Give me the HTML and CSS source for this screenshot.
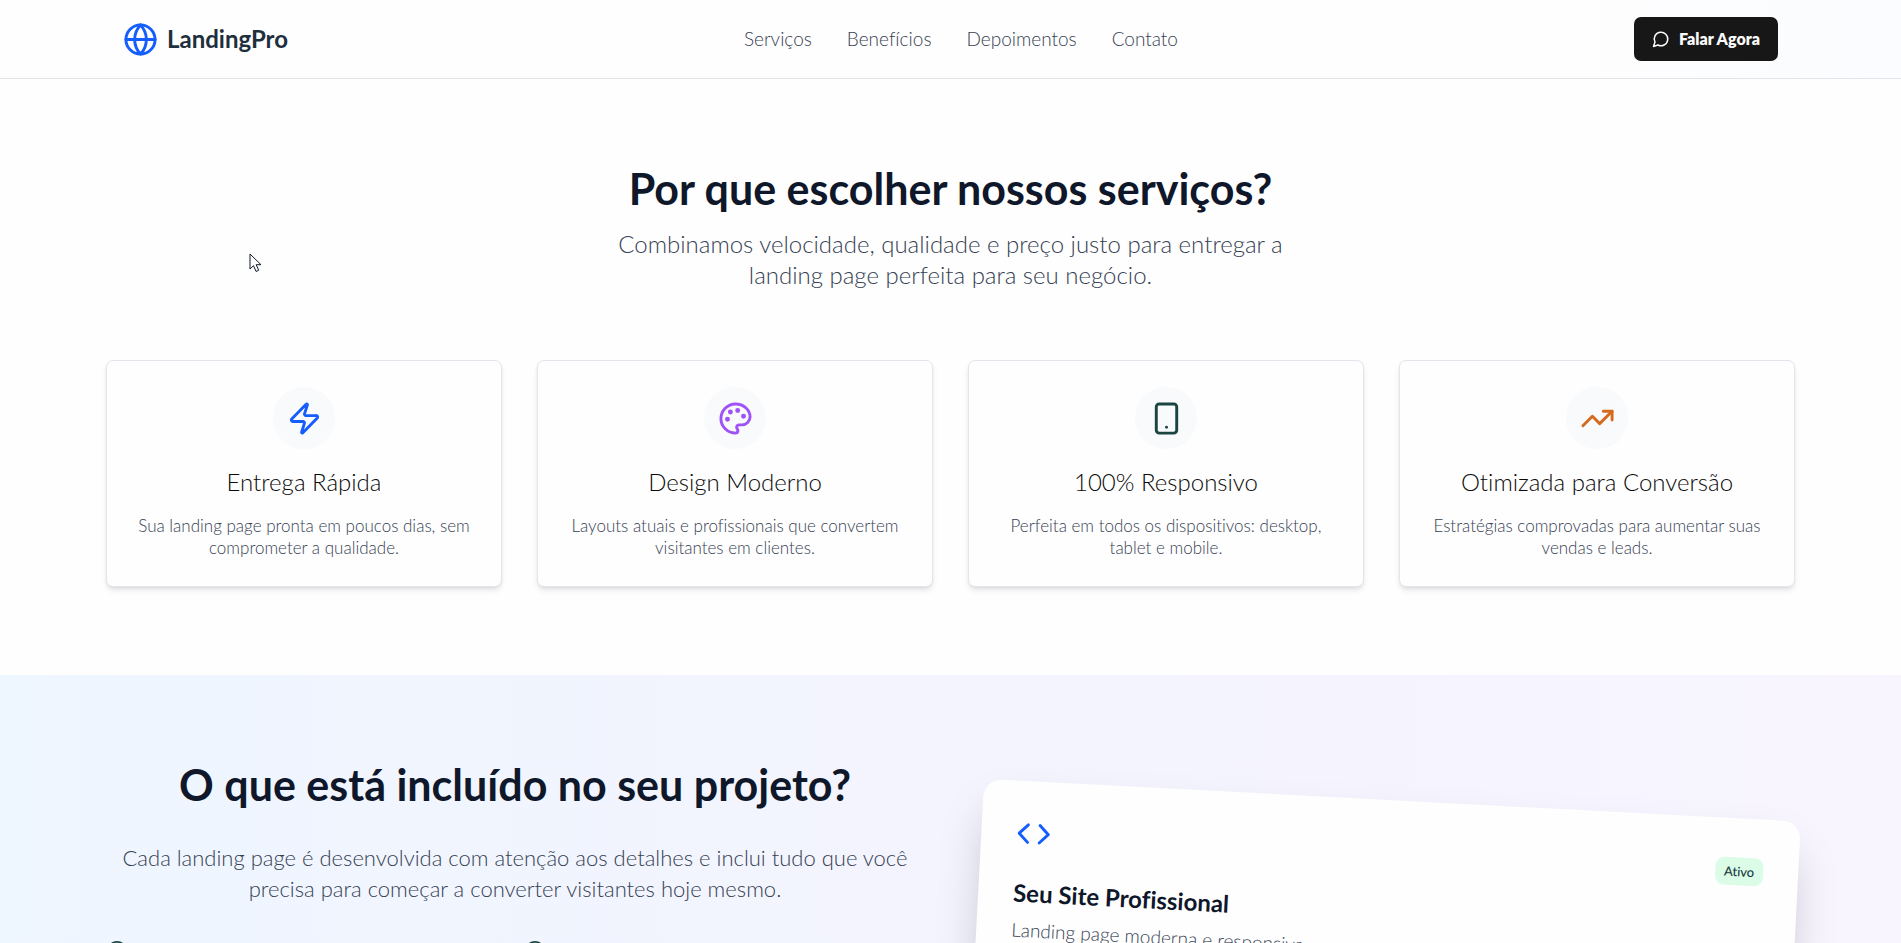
FILE: index.html
```html
<!DOCTYPE html>
<html lang="pt-BR">
<head>
<meta charset="utf-8">
<meta name="viewport" content="width=device-width, initial-scale=1">
<title>LandingPro</title>
<link rel="stylesheet" href="styles.css">
</head>
<body>
<header class="header">
  <div class="container header-inner">
    <div class="brand">
      <svg class="icon icon-lg blue" viewBox="0 0 24 24" aria-hidden="true"><circle cx="12" cy="12" r="10"/><path d="M12 2a14.5 14.5 0 0 0 0 20 14.5 14.5 0 0 0 0-20"/><path d="M2 12h20"/></svg>
      <span>LandingPro</span>
    </div>
    <nav class="nav">
      <a href="#servicos">Serviços</a>
      <a href="#beneficios">Benefícios</a>
      <a href="#depoimentos">Depoimentos</a>
      <a href="#contato">Contato</a>
    </nav>
    <button class="cta" type="button">
      <svg class="icon icon-sm" viewBox="0 0 24 24" aria-hidden="true"><path d="M7.9 20A9 9 0 1 0 4 16.1L2 22Z"/></svg>
      Falar Agora
    </button>
  </div>
</header>
<main>
  <section class="services" id="servicos">
    <div class="container">
      <h2 class="heading">Por que escolher nossos serviços?</h2>
      <p class="lead">Combinamos velocidade, qualidade e preço justo para entregar a landing page perfeita para seu negócio.</p>
      <div class="cards">
        <article class="card">
          <div class="bubble"><svg class="icon icon-lg blue" viewBox="0 0 24 24" aria-hidden="true"><path d="M4 14a1 1 0 0 1-.78-1.63l9.9-10.2a.5.5 0 0 1 .86.46l-1.92 6.02A1 1 0 0 0 13 10h7a1 1 0 0 1 .78 1.63l-9.9 10.2a.5.5 0 0 1-.86-.46l1.92-6.02A1 1 0 0 0 11 14z"/></svg></div>
          <h3>Entrega Rápida</h3>
          <p>Sua landing page pronta em poucos dias, sem comprometer a qualidade.</p>
        </article>
        <article class="card">
          <div class="bubble"><svg class="icon icon-lg purple" viewBox="0 0 24 24" aria-hidden="true"><g fill="currentColor"><circle cx="13.5" cy="6.5" r=".7"/><circle cx="17.5" cy="10.5" r=".7"/><circle cx="8.5" cy="7.5" r=".7"/><circle cx="6.5" cy="12.5" r=".7"/></g><path d="M12 2C6.5 2 2 6.5 2 12s4.500 10 10 10c.926 0 1.648-.746 1.648-1.688 0-.437-.18-.835-.437-1.125-.29-.289-.438-.652-.438-1.125a1.640 1.640 0 0 1 1.668-1.668h1.996c3.051 0 5.555-2.503 5.555-5.554C21.965 6.012 17.461 2 12 2z"/></svg></div>
          <h3>Design Moderno</h3>
          <p>Layouts atuais e profissionais que convertem visitantes em clientes.</p>
        </article>
        <article class="card">
          <div class="bubble"><svg class="icon icon-lg green" viewBox="0 0 24 24" aria-hidden="true"><rect x="5" y="2" width="14" height="20" rx="2"/><path d="M12 18h.01"/></svg></div>
          <h3>100% Responsivo</h3>
          <p>Perfeita em todos os dispositivos: desktop, tablet e mobile.</p>
        </article>
        <article class="card">
          <div class="bubble"><svg class="icon icon-lg orange" viewBox="0 0 24 24" aria-hidden="true"><path d="m22 7-8.500 8.500-5-5L2 17"/><path d="M16 7h6v6"/></svg></div>
          <h3>Otimizada para Conversão</h3>
          <p>Estratégias comprovadas para aumentar suas vendas e leads.</p>
        </article>
      </div>
    </div>
  </section>
  <section class="included" id="beneficios">
    <div class="container split">
      <div>
        <h2 class="heading">O que está incluído no seu projeto?</h2>
        <p class="intro">Cada landing page é desenvolvida com atenção aos detalhes e inclui tudo que você precisa para começar a converter visitantes hoje mesmo.</p>
        <ul class="checks">
          <li><svg class="icon icon-md green" viewBox="0 0 24 24" aria-hidden="true"><circle cx="12" cy="12" r="10"/><path d="m9 12 2 2 4-4"/></svg></li>
          <li><svg class="icon icon-md green" viewBox="0 0 24 24" aria-hidden="true"><circle cx="12" cy="12" r="10"/><path d="m9 12 2 2 4-4"/></svg></li>
        </ul>
      </div>
      <div class="showcase">
        <article class="preview">
          <div class="preview-top">
            <svg class="icon icon-lg blue" viewBox="0 0 24 24" aria-hidden="true"><path d="m16 18 6-6-6-6"/><path d="m8 6-6 6 6 6"/></svg>
            <span class="badge">Ativo</span>
          </div>
          <h3>Seu Site Profissional</h3>
          <p>Landing page moderna e responsiva</p>
        </article>
      </div>
    </div>
  </section>
</main>
<svg class="pointer" viewBox="0 0 13 20" aria-hidden="true"><path d="M1 1v15l3.500-3.300 2.600 5.800 2.600-1.200L7.200 11.700H12z"/></svg>
</body>
</html>
```
FILE: styles.css
```css
* { box-sizing: border-box; }

body {
  margin: 0;
  height: 100vh;
  overflow: hidden;
  position: relative;
  background: #fefefe;
  color: #0f172a;
  font-family: Lato, "Open Sans", sans-serif;
  font-size: 19px;
  line-height: 26px;
  font-weight: 300;
  font-variant-ligatures: none;
}

h2, h3, p, ul { margin: 0; padding: 0; }

.container {
  width: 100%;
  max-width: 1689px;
  margin: 0 auto;
}

.icon {
  display: block;
  flex: none;
  fill: none;
  stroke: currentColor;
  stroke-width: 2;
  stroke-linecap: round;
  stroke-linejoin: round;
}
.icon-sm { width: 18px; height: 18px; }
.icon-md { width: 22px; height: 22px; }
.icon-lg { width: 35px; height: 35px; }
.blue { color: #155dfc; }
.purple { color: #9f52f7; }
.green { color: #1b4540; }
.orange { color: #d66a1f; }

.header {
  border-bottom: 1px solid #e2e4ea;
  background: linear-gradient(to right, #fefefe 80%, #fbfcff);
}
.header-inner {
  display: flex;
  align-items: center;
  justify-content: space-between;
  padding: 17px;
}
.brand {
  display: flex;
  align-items: center;
  gap: 9px;
  color: #1e2f3d;
  font-size: 24px;
  font-weight: 700;
}
.nav { display: flex; gap: 35px; }
.nav a { color: #364153; text-decoration: none; }
.cta {
  display: flex;
  align-items: center;
  gap: 9px;
  height: 44px;
  padding: 0 18px;
  border: 0;
  border-radius: 7px;
  background: #171717;
  color: #fafafa;
  font: 800 16px/22px Lato, "Open Sans", sans-serif;
}

.heading {
  font-size: 43px;
  line-height: 44px;
  font-weight: 700;
  text-align: center;
}

.services { padding: 88px 17px; }
.lead {
  max-width: 740px;
  margin: 17px auto 70px;
  color: #364153;
  font-size: 24px;
  line-height: 31px;
  text-align: center;
}
.cards {
  display: grid;
  grid-template-columns: repeat(4, 1fr);
  gap: 35px;
}
.card {
  display: flex;
  flex-direction: column;
  align-items: center;
  padding: 26px 26px 27px;
  border: 1px solid #e3e5ec;
  border-radius: 7px;
  background: #fefefe;
  box-shadow: 0 4px 6px -1px rgba(0, 0, 0, .1), 0 2px 4px -2px rgba(0, 0, 0, .1);
  text-align: center;
}
.bubble {
  display: grid;
  place-items: center;
  width: 62px;
  height: 62px;
  border-radius: 50%;
  background: #f9fafc;
}
.card h3 {
  margin: 17px 0 18px;
  color: #0a0a0a;
  font-size: 24px;
  line-height: 31px;
  font-weight: 300;
}
.card p {
  color: #364153;
  font-size: 17px;
  line-height: 22px;
}

.included {
  padding: 88px 17px;
  background: linear-gradient(to right, #eef6ff, #f3f4fe 45%, #f8f5ff);
}
.split {
  display: grid;
  grid-template-columns: 1fr 1fr;
  gap: 53px;
}
.intro {
  margin: 35px 0 36px;
  color: #364153;
  font-size: 22px;
  line-height: 31px;
  text-align: center;
}
.checks {
  display: grid;
  grid-template-columns: 1fr 1fr;
  gap: 17px;
  list-style: none;
}
.showcase { padding-top: 37px; }
.preview {
  min-height: 250px;
  padding: 35px;
  border-radius: 18px;
  background: #fefefe;
  box-shadow: 0 25px 50px -12px rgba(0, 0, 0, .25);
  transform: rotate(3deg);
}
.preview-top {
  display: flex;
  align-items: center;
  justify-content: space-between;
  margin-bottom: 26px;
}
.badge {
  padding: 4px 9px;
  border-radius: 9px;
  background: #dbfce7;
  color: #1a3a42;
  font-size: 13px;
  line-height: 20px;
  font-weight: 500;
}
.preview h3 {
  margin-bottom: 9px;
  font-size: 24px;
  line-height: 31px;
  font-weight: 700;
}
.preview p { color: #364153; }

.pointer {
  position: absolute;
  left: 249px;
  top: 253px;
  width: 13px;
  height: 20px;
  fill: #fff;
  stroke: #111827;
}
```
